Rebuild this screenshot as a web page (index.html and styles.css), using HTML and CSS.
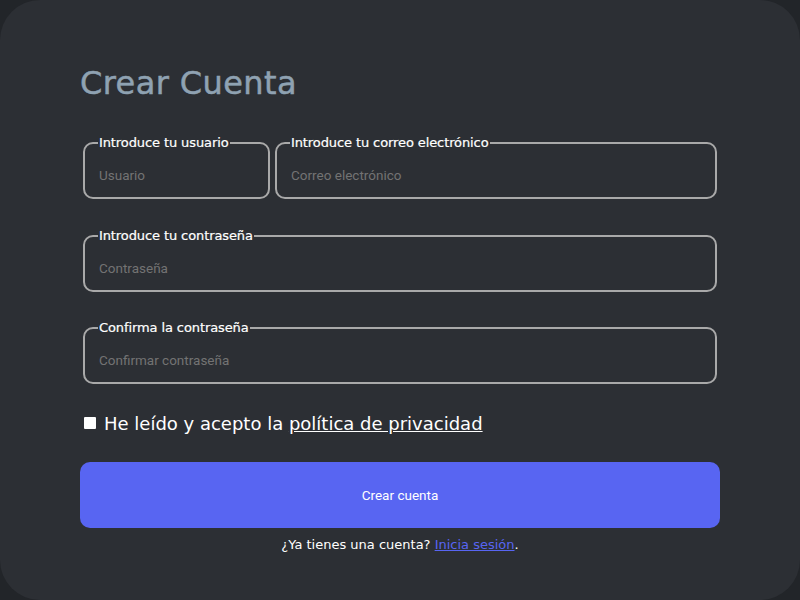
FILE: index.html
```html
<!DOCTYPE html>
<html lang="es">
<head>
<meta charset="utf-8">
<title>Crear Cuenta</title>
<link rel="stylesheet" href="styles.css">
</head>
<body>
<div class="card">
  <h1 class="title">Crear Cuenta</h1>
  <form class="form">
    <div class="row">
      <fieldset class="field field-user">
        <legend class="legend">Introduce tu usuario</legend>
        <input class="input" type="text" placeholder="Usuario">
      </fieldset>
      <fieldset class="field field-grow">
        <legend class="legend">Introduce tu correo electrónico</legend>
        <input class="input" type="email" placeholder="Correo electrónico">
      </fieldset>
    </div>
    <div class="row">
      <fieldset class="field field-grow">
        <legend class="legend">Introduce tu contraseña</legend>
        <input class="input" type="password" placeholder="Contraseña">
      </fieldset>
    </div>
    <div class="row row-last">
      <fieldset class="field field-grow">
        <legend class="legend">Confirma la contraseña</legend>
        <input class="input" type="password" placeholder="Confirmar contraseña">
      </fieldset>
    </div>
    <label class="check">
      <span class="box"></span>
      <span>He leído y acepto la <a class="policy" href="#">política de privacidad</a></span>
    </label>
    <button class="submit" type="button">Crear cuenta</button>
    <p class="login">¿Ya tienes una cuenta? <a class="login-link" href="#">Inicia sesión</a>.</p>
  </form>
</div>
</body>
</html>
```
FILE: styles.css
```css
html, body {
  margin: 0;
  padding: 0;
  background: #222529;
}
.card {
  width: 800px;
  height: 600px;
  box-sizing: border-box;
  border-radius: 40px;
  background: #2c2f34;
  padding: 61px 80px 0 80px;
  font-family: "DejaVu Sans", sans-serif;
}
.title {
  margin: 0;
  font-family: "DejaVu Sans", sans-serif;
  font-size: 32px;
  font-weight: 500;
  color: #8fa2b2;
  letter-spacing: 0.4px;
  height: 44px;
  line-height: 44px;
  -webkit-text-stroke: 0.5px #8fa2b2;
}
.form {
  margin-top: 31px;
  display: flex;
  flex-direction: column;
}
.row {
  display: flex;
  gap: 5px;
  padding: 0 3px;
  margin-bottom: 30px;
}
.row + .row { margin-bottom: 29px; }
.row.row-last { margin-bottom: 0; }
.field {
  margin: 0;
  height: 63px;
  box-sizing: border-box;
  border: 2px solid #a9a9a9;
  border-radius: 10px;
  padding: 0 13px;
  display: flex;
  align-items: center;
}
.field-user { width: 187px; flex: none; }
.field-grow { flex: 1; }
.legend {
  padding: 0 1px;
  font-size: 13px;
  color: #ffffff;
  line-height: 14px;
  letter-spacing: -0.1px;
  -webkit-text-stroke: 0.2px #ffffff;
}
.input {
  border: none;
  background: transparent;
  outline: none;
  width: 100%;
  padding: 0 0 0 1px;
  margin-top: 2px;
  font-family: Roboto, "Liberation Sans", Arial, sans-serif;
  font-size: 13.5px;
  color: #ddd;
}
.input::placeholder { color: #737373; }
.check {
  display: flex;
  align-items: center;
  gap: 8px;
  margin: 26px 0 0 4px;
  height: 26px;
  font-size: 18px;
  color: #ffffff;
}
.box {
  width: 12px;
  height: 12px;
  background: #ffffff;
  border-radius: 1px;
  flex: none;
}
.policy { color: #ffffff; }
.submit {
  margin-top: 26px;
  height: 66px;
  border: none;
  border-radius: 10px;
  background: #5865f2;
  color: #ffffff;
  font-family: Roboto, "Liberation Sans", Arial, sans-serif;
  font-size: 13.5px;
}
.login {
  margin: 8px 0 0;
  text-align: center;
  font-size: 13px;
  line-height: 18px;
  color: #ffffff;
}
.login-link { color: #5865f2; }
```
